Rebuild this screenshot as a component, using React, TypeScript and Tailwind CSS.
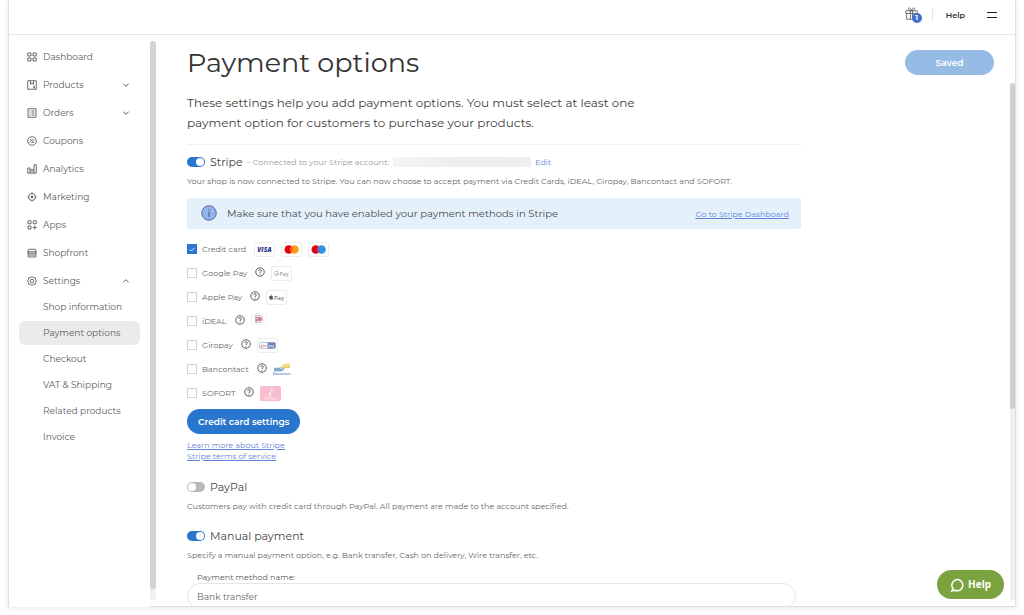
import { ReactNode, useState } from "react";
import clsx from "clsx";

const Icon = ({ children }: { children: ReactNode }) => (
  <svg
    viewBox="0 0 20 20"
    className="size-2.5 shrink-0"
    fill="none"
    stroke="currentColor"
    strokeWidth={1.8}
    aria-hidden="true"
  >
    {children}
  </svg>
);

const menu = [
  {
    label: "Dashboard",
    icon: (
      <Icon>
        <path d="M1.5 2h6.5v6H1.5zM12 2h6.5v6H12zM1.5 12h6.5v6H1.5zM12 12h6.5v6H12z" />
      </Icon>
    ),
  },
  {
    label: "Products",
    arrow: "down",
    icon: (
      <Icon>
        <path d="M1.5 1.5h17v17h-17zM7 1.5v7l3-2 3 2v-7M12 15.5h4M12 12.5h4" />
      </Icon>
    ),
  },
  {
    label: "Orders",
    arrow: "down",
    icon: (
      <Icon>
        <path d="M2 1.5h16v17H2zM5 6h2M9 6h6M5 10h2M9 10h6M5 14h2M9 14h6" />
      </Icon>
    ),
  },
  {
    label: "Coupons",
    icon: (
      <Icon>
        <circle cx="10" cy="10" r="8.6" />
        <path d="M6 6.5l8 7" />
        <path d="M6.5 10.5v2.5M13.5 7v2.5M9 13h2M9.5 7h2" />
      </Icon>
    ),
  },
  {
    label: "Analytics",
    icon: (
      <Icon>
        <path d="M1.5 8h4.5v10.5H1.5zM7.8 11h4.4v7.5H7.8zM14 1.5h4.5v17H14z" />
      </Icon>
    ),
  },
  {
    label: "Marketing",
    icon: (
      <Icon>
        <circle cx="10" cy="10" r="7" />
        <circle cx="10" cy="10" r="1.8" fill="currentColor" />
        <path d="M10 1v3.5M10 15.5v3.5M1 10h3.5M15.5 10h3.5" />
      </Icon>
    ),
  },
  {
    label: "Apps",
    icon: (
      <Icon>
        <path d="M2 1.5h6v6H2zM12.5 1.5h6v6h-6zM2 12h6v6H2zM15.5 11v8M11.5 15h8" />
      </Icon>
    ),
  },
  {
    label: "Shopfront",
    icon: (
      <Icon>
        <path d="M3.5 2.5h13l2 5v3h-17v-3zM1.5 7.5h17M2.5 10.5v7.5h15v-7.5M2.5 14h15" />
      </Icon>
    ),
  },
  {
    label: "Settings",
    arrow: "up",
    icon: (
      <Icon>
        <path d="M10 1l3 2.2 3.8.5.5 3.8L19 10l-1.7 2.6-.5 3.7-3.8.5L10 19l-3-2.2-3.8-.5-.5-3.7L1 10l1.7-2.5.5-3.8L7 3.2z" />
        <circle cx="10" cy="10" r="3.6" />
      </Icon>
    ),
  },
];

const settingsMenu = [
  "Shop information",
  "Payment options",
  "Checkout",
  "VAT & Shipping",
  "Related products",
  "Invoice",
];

const Arrow = ({ up }: { up: boolean }) => (
  <svg
    viewBox="0 0 12 12"
    className="size-2"
    fill="none"
    stroke="currentColor"
    strokeWidth={1.5}
    aria-hidden="true"
  >
    <path d={up ? "M2 8l4-4 4 4" : "M2 4l4 4 4-4"} />
  </svg>
);

const Sidebar = () => (
  <nav className="w-[141px] shrink-0 pt-2 text-[9px] text-[#5c5c5c]" aria-label="Main menu">
    <ul>
      {menu.map((item) => (
        <li key={item.label}>
          <a href="#" className="flex h-7 items-center gap-1.5 pl-[18px] pr-5">
            {item.icon}
            <span className="flex-1">{item.label}</span>
            {item.arrow && <Arrow up={item.arrow === "up"} />}
          </a>
        </li>
      ))}
    </ul>
    <ul className="flex flex-col gap-0.5 px-2.5">
      {settingsMenu.map((label) => (
        <li key={label}>
          <a
            href="#"
            className={clsx(
              "flex h-6 items-center rounded-md pl-6",
              label === "Payment options" && "bg-[#ebebeb]"
            )}
          >
            {label}
          </a>
        </li>
      ))}
    </ul>
  </nav>
);

const Card = ({ children }: { children: ReactNode }) => (
  <svg viewBox="0 0 42 30" className="h-[15px] w-[21px]" aria-hidden="true">
    <rect
      x="1"
      y="1"
      width="40"
      height="28"
      rx="3"
      fill="#fff"
      stroke="#ececec"
      strokeWidth="2"
    />
    {children}
  </svg>
);

const CreditCards = () => (
  <span className="flex gap-1.5">
    <Card>
      <text
        x="21"
        y="20"
        fontSize="13"
        fontWeight="800"
        fontStyle="italic"
        textAnchor="middle"
        fill="#28368c"
        fontFamily="Open Sans, sans-serif"
      >
        VISA
      </text>
    </Card>
    <Card>
      <circle cx="15.5" cy="15" r="8.5" fill="#e3000f" />
      <circle cx="27" cy="15" r="8.5" fill="#f79e1b" />
      <path d="M21.25 8.7a8.5 8.5 0 0 1 0 12.6a8.5 8.5 0 0 1 0-12.6z" fill="#f26a0a" />
    </Card>
    <Card>
      <circle cx="15.5" cy="15" r="8.5" fill="#e3000f" />
      <circle cx="27" cy="15" r="8.5" fill="#2f95e0" />
      <path d="M21.25 8.7a8.5 8.5 0 0 1 0 12.6a8.5 8.5 0 0 1 0-12.6z" fill="#6c6bbd" />
    </Card>
  </span>
);

const GooglePay = () => (
  <Card>
    <g fill="none" strokeWidth="2">
      <path d="M14 12a4.5 4.5 0 0 0-7 1" stroke="#ea8b83" />
      <path d="M7 13a4.5 4.5 0 0 0 0 4" stroke="#f6cf66" />
      <path d="M7 17a4.5 4.5 0 0 0 6 1.5" stroke="#7cc293" />
      <path d="M13 18.5a4.5 4.5 0 0 0 1.8-3.5h-4" stroke="#84a9ef" />
    </g>
    <text x="17" y="19" fontSize="11" fill="#8a8a8a" fontFamily="Open Sans, sans-serif">
      Pay
    </text>
  </Card>
);

const ApplePay = () => (
  <Card>
    <path
      d="M10.5 12c1.5-1 3-.4 3.5.5-1.6 1-1.4 3 .3 4-.6 1.7-1.6 3.5-2.7 3-.8-.4-1.4-.4-2.2 0-1.8.5-4.2-4.5-2.6-6.8 1-1.4 2.6-1.100 3.700-.7zM10.200 11.300c0-1.500.9-2.600 2.200-2.800.1 1.500-.9 2.700-2.200 2.800z"
      fill="#555"
    />
    <text x="16" y="19.5" fontSize="12" fill="#555" fontFamily="Open Sans, sans-serif">
      Pay
    </text>
  </Card>
);

const Ideal = () => (
  <svg viewBox="0 0 32 24" className="mb-1 h-3 w-4" aria-hidden="true">
    <rect x="1" y="1" width="30" height="22" rx="3" fill="#fff" stroke="#f2f2f2" strokeWidth="2" />
    <path d="M9 5h8c4 0 6.5 3 6.5 7s-2.5 7-6.5 7H9z" fill="#fff" stroke="#b5a3ad" strokeWidth="1.5" />
    <path d="M13 7.5h4c3 0 4.5 2 4.5 4.5s-1.5 4.5-4.5 4.5h-4z" fill="#e16a9d" />
    <circle cx="11" cy="9" r="1.5" fill="#777" />
    <path d="M10 12h2v5h-2z" fill="#777" />
  </svg>
);

const Giropay = () => (
  <Card>
    <rect x="5" y="9" width="32" height="12" rx="2" fill="#fff" stroke="#a9b8d0" strokeWidth="1.5" />
    <path d="M21 9h14a2 2 0 0 1 2 2v8a2 2 0 0 1-2 2H21z" fill="#7088ad" />
    <text x="7" y="17.5" fontSize="6" fontWeight="700" fill="#e08b91">
      giro
    </text>
    <text x="23" y="17.5" fontSize="6" fontWeight="700" fill="#d5deeb">
      pay
    </text>
  </Card>
);

const Bancontact = () => (
  <svg viewBox="0 0 36 24" className="h-3 w-[18px]" aria-hidden="true">
    <path d="M2 9.5h9c4 0 6-2 8-4.5h15v4.5H24c-2 4-5 7.5-10 7.5H2z" fill="#84aad6" />
    <path d="M17 9c2-4 5-8 10-8h7v8H23c-2 0-3 2-5 4l-5-3.5z" fill="#f8dc72" />
    <text x="17" y="23" fontSize="6" fontWeight="700" textAnchor="middle" fill="#76a0d0">
      Bancontact
    </text>
  </svg>
);

const Sofort = () => (
  <svg viewBox="0 0 42 30" className="h-[15px] w-[21px]" aria-hidden="true">
    <rect width="42" height="30" rx="3" fill="#fabdcd" />
    <path d="M23 5l-3 6h4l3-6zM19 12h4l-2 4h3l-4 5c-3 0-4-1-3-3z" fill="#fde3ea" />
    <text x="21" y="27" fontSize="6" fontWeight="700" textAnchor="middle" fill="#fde3ea">
      SOFORT
    </text>
  </svg>
);

const HelpMark = () => (
  <svg
    viewBox="0 0 20 20"
    className="mb-0.5 size-2.5"
    fill="none"
    stroke="#4a4a4a"
    strokeWidth={1.8}
    aria-hidden="true"
  >
    <circle cx="10" cy="10" r="8.5" />
    <path d="M7.3 8c0-3.5 5.4-3.5 5.4-.3 0 2-2.7 2-2.7 4.3M10 13.5v2" />
  </svg>
);

const methods = [
  { id: "card", label: "Credit card", logo: <CreditCards /> },
  { id: "google", label: "Google Pay", help: true, logo: <GooglePay /> },
  { id: "apple", label: "Apple Pay", help: true, logo: <ApplePay /> },
  { id: "ideal", label: "iDEAL", help: true, logo: <Ideal /> },
  { id: "giropay", label: "Giropay", help: true, logo: <Giropay /> },
  { id: "bancontact", label: "Bancontact", help: true, logo: <Bancontact /> },
  { id: "sofort", label: "SOFORT", help: true, logo: <Sofort /> },
];

const Checkbox = ({ id, defaultChecked }: { id: string; defaultChecked: boolean }) => (
  <span className="grid size-2.5 place-items-center">
    <input
      id={id}
      type="checkbox"
      defaultChecked={defaultChecked}
      className="peer col-start-1 row-start-1 size-2.5 appearance-none border border-[#d4d4d4] bg-white checked:border-[#2876cd] checked:bg-[#2876cd]"
    />
    <svg
      viewBox="0 0 12 12"
      className="pointer-events-none invisible col-start-1 row-start-1 size-2 peer-checked:visible"
      fill="none"
      stroke="#fff"
      strokeWidth={1.3}
      aria-hidden="true"
    >
      <path d="M2.5 6.5l2.5 2.5 5-5" />
    </svg>
  </span>
);

interface IToggleProps {
  id: string;
  label: string;
  defaultChecked?: boolean;
}

const Toggle = ({ id, label, defaultChecked = false }: IToggleProps) => {
  const [on, setOn] = useState(defaultChecked);

  return (
    <div className="flex items-center gap-[5px]">
      <input
        id={id}
        type="checkbox"
        role="switch"
        checked={on}
        onChange={(event) => setOn(event.target.checked)}
        className="flex h-2.5 w-[18px] appearance-none items-center rounded-full bg-[#b9b9b9] px-px before:size-2 before:rounded-full before:bg-white checked:justify-end checked:bg-[#2876cd]"
      />
      <label htmlFor={id} className="text-[11px] text-[#444]">
        {label}
      </label>
    </div>
  );
};

const Header = () => (
  <header className="flex h-[35px] shrink-0 items-center justify-end border-b border-[#e8e8e8] pb-1 pr-[18px]">
    <button type="button" aria-label="Gifts" className="relative mr-2.5 flex h-4 w-[17px]">
      <svg
        viewBox="0 0 24 24"
        className="size-[13px]"
        fill="none"
        stroke="#555"
        strokeWidth={1.5}
        aria-hidden="true"
      >
        <path d="M1.5 7h21v5h-21zM3 12v10.5h18V12M10 7v15.5M14 7v15.5M12 6.5C9 6.5 6 5.5 6 3.5S10 0 12 6.5zM12 6.5c3 0 6-1 6-3S14 0 12 6.5z" />
      </svg>
      <span className="absolute right-0 bottom-0 flex size-2.5 items-center justify-center rounded-full bg-[#3f6fd1] text-[7px] font-bold text-white">
        1
      </span>
    </button>
    <a href="#" className="border-l border-[#e5e5e5] py-px pl-[13px] font-semibold text-[#333]">
      Help
    </a>
    <button type="button" aria-label="Menu" className="ml-[22px] flex w-2.5 flex-col gap-1">
      <span className="h-px w-full bg-[#222]" />
      <span className="h-px w-full bg-[#222]" />
    </button>
  </header>
);

const PaymentOptions = () => (
  <main className="flex min-w-0 flex-1 items-start justify-between overflow-hidden pt-2 pr-4 pl-[31px]">
    <div className="w-full max-w-[614px]">
      <h1 className="text-[27px] leading-10 text-[#333]">Payment options</h1>
      <p className="mt-2.5 max-w-[460px] text-xs leading-5 text-[#404040]">
        These settings help you add payment options. You must select at least one payment
        option for customers to purchase your products.
      </p>
      <hr className="mt-[11px] border-[#f0f0f0]" />

      <section className="mt-[7px]">
        <div className="flex h-5 items-center gap-1">
          <Toggle id="stripe" label="Stripe" defaultChecked />
          <span className="text-[#999]">– Connected to your Stripe account:</span>
          <span className="h-2.5 w-[138px] bg-linear-to-r from-[#f5f5f5] via-[#ededed] to-[#f0eeee]" />
          <a href="#" className="text-[#5f83d6]">
            Edit
          </a>
        </div>
        <p className="mt-px leading-4 text-[#666]">
          Your shop is now connected to Stripe. You can now choose to accept payment via
          Credit Cards, iDEAL, Giropay, Bancontact and SOFORT.
        </p>

        <div className="mt-[9px] flex h-[31px] items-center rounded-xs bg-[#e4f1fa] pr-3 pl-3.5">
          <svg viewBox="0 0 32 32" className="mb-0.5 size-4" fill="none" aria-hidden="true">
            <circle cx="16" cy="16" r="14.5" fill="#94b3ec" stroke="#5c6c8e" strokeWidth="2" />
            <path d="M16 13v11M16 8v2.5" stroke="#4a5d87" strokeWidth="2" />
          </svg>
          <span className="ml-2.5 flex-1 text-[10px] text-[#4a4a4a]">
            Make sure that you have enabled your payment methods in Stripe
          </span>
          <a href="#" className="text-[#5f83d6] underline">
            Go to Stripe Dashboard
          </a>
        </div>

        <ul className="mt-2">
          {methods.map((method) => (
            <li key={method.id} className="flex h-6 items-center">
              <Checkbox id={method.id} defaultChecked={method.id === "card"} />
              <label htmlFor={method.id} className="ml-[5px] text-[#666]">
                {method.label}
              </label>
              <span className="ml-2 flex items-center gap-1.5">
                {method.help && <HelpMark />}
                {method.logo}
              </span>
            </li>
          ))}
        </ul>

        <button
          type="button"
          className="mt-1 block h-[25px] rounded-full bg-[#2876cd] px-[11px] text-[9px] font-semibold text-white"
        >
          Credit card settings
        </button>
        <div className="mt-1.5 flex flex-col items-start leading-[11px] text-[#5f83d6] underline">
          <a href="#">Learn more about Stripe</a>
          <a href="#">Stripe terms of service</a>
        </div>
      </section>

      <section className="mt-[15px]">
        <div className="flex h-5 items-center">
          <Toggle id="paypal" label="PayPal" />
        </div>
        <p className="mt-px leading-4 text-[#666]">
          Customers pay with credit card through PayPal. All payment are made to the account
          specified.
        </p>
      </section>

      <section className="mt-3">
        <div className="flex h-5 items-center">
          <Toggle id="manual" label="Manual payment" defaultChecked />
        </div>
        <p className="mt-px leading-4 text-[#666]">
          Specify a manual payment option, e.g. Bank transfer, Cash on delivery, Wire
          transfer, etc.
        </p>
        <label htmlFor="method-name" className="mt-2 block pl-2.5 leading-3 text-[#555]">
          Payment method name:
        </label>
        <input
          id="method-name"
          type="text"
          defaultValue="Bank transfer"
          className="block h-[26px] w-full max-w-[609px] rounded-full border border-[#e6e6e6] px-[9px] text-[9px] text-[#666]"
        />
      </section>
    </div>
    <button
      type="button"
      className="mt-[7px] h-[25px] w-[89px] shrink-0 rounded-full bg-[#96bce6] text-[9px] font-semibold text-white"
    >
      Saved
    </button>
  </main>
);

const App = () => {
  return (
    <div className="flex h-screen flex-col bg-white px-2 pb-2 font-['Montserrat','Inter',sans-serif] text-[8px]">
      <div className="flex min-h-0 flex-1 flex-col border-x border-[#e0e0e0] shadow-[0_1px_5px_rgba(0,0,0,0.1)]">
        <Header />
        <div className="flex min-h-0 flex-1">
          <Sidebar />
          <div className="flex min-w-0 flex-1 border-b border-[#e0e0e0]">
            <div className="w-1.5 shrink-0 pt-1.5 pb-1.5">
              <div className="h-full rounded-full bg-[#f0f0f0]">
                <div className="h-[98%] rounded-full bg-[#d3d3d3]" />
              </div>
            </div>
            <PaymentOptions />
            <div className="w-[5px] shrink-0 pt-12 pb-1.5">
              <div className="h-full rounded-full bg-[#f0f0f0]">
                <div className="h-[63%] rounded-full bg-[#cfcfcf]" />
              </div>
            </div>
          </div>
        </div>
      </div>
      <button
        type="button"
        className="fixed right-5 bottom-4 flex h-[29px] items-center gap-1 rounded-full bg-[#7aa33f] px-[13px] font-['Noto_Sans',sans-serif] text-[10px] font-bold text-white"
      >
        <svg
          viewBox="0 0 24 24"
          className="size-3.5"
          fill="none"
          stroke="currentColor"
          strokeWidth={2.6}
          aria-hidden="true"
        >
          <path d="M5.5 18.5A9.5 9.5 0 1 1 9 21l-6.5 1.5z" strokeLinejoin="round" />
        </svg>
        Help
      </button>
    </div>
  );
};

export default App;
